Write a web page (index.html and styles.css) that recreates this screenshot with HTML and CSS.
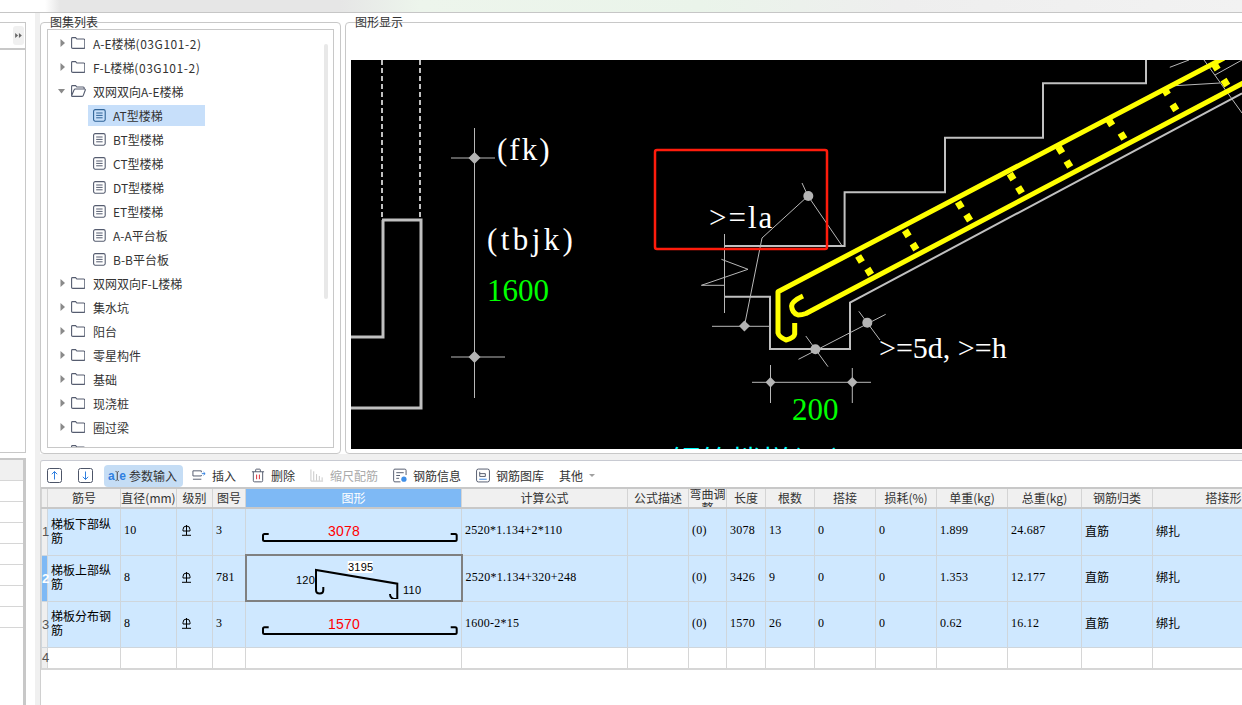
FILE: index.html
```html
<!DOCTYPE html>
<html lang="zh-CN">
<head>
<meta charset="utf-8">
<title>图集列表</title>
<link rel="stylesheet" href="styles.css">
</head>
<body>
<svg class="defs" width="0" height="0" aria-hidden="true">
  <defs>
    <symbol id="i-folder" viewBox="0 0 14 12"><path d="M.6 2V1.4q0-.8.8-.8h3.2l1.2 1.4h6.8q1.2 0 1.2 1.2v7q0 1.2-1.2 1.2H1.8q-1.2 0-1.2-1.2z" fill="none" stroke="currentColor" stroke-width="1.1"/></symbol>
    <symbol id="i-open" viewBox="0 0 15 12"><path d="M.6 10.500V1.400q0-.8.8-.8h3.200l1.200 1.400h6.400q1 0 1 1V4M.6 10.900 3 5q.3-1 1.300-1h9.200q1 0 .8 1l-2 5.400q-.3 1-1.200 1H1.400q-.8 0-.8-.5z" fill="none" stroke="currentColor" stroke-width="1.1"/></symbol>
    <symbol id="i-doc" viewBox="0 0 13 13"><rect x=".6" y=".6" width="11.6" height="11.6" rx="1.6" fill="none" stroke="currentColor" stroke-width="1.1"/><path d="M3.2 4h6.4M3.2 6.4h6.4M3.2 8.8h6.4" stroke="currentColor" fill="none"/></symbol>
    <symbol id="i-more" viewBox="0 0 5 8"><path d="M.5 0 5 4 .5 8z" fill="currentColor"/></symbol>
    <symbol id="i-grade" viewBox="0 0 9 11"><path d="M1 6V4.500a3.500 3.500 0 0 1 7 0V6zM4.500 0v10M0 10.300h9" fill="none" stroke="currentColor"/></symbol>
  </defs>
</svg>

<div class="topbar"></div>
<div class="main">
  <aside class="side">
    <div class="side-frame">
      <div class="side-tools"><span class="collapse"><svg class="collapse-ic" viewBox="0 0 8 6"><path d="M0 0 3.500 3 0 6zM4.500 0 8 3 4.500 6z"/></svg></span></div>
      <div class="side-blank"></div>
      <div class="side-grid">
        <div class="side-head"></div>
        <div class="side-row"></div><div class="side-row"></div><div class="side-row"></div><div class="side-row"></div>
        <div class="side-row"></div><div class="side-row"></div><div class="side-row"></div>
      </div>
    </div>
  </aside>

  <div class="content">
    <div class="upper">
      <section class="group group-list">
        <span class="legend">图集列表</span>
        <div class="listbox">
          <span class="scrollbar"></span>
          <ul class="tree">
            <li class="node"><svg class="arrow"><use href="#i-more" x="2" y="0" width="5" height="8"/></svg><svg class="folder"><use href="#i-folder"/></svg><span>A-E楼梯<span class="latin">(03G101-2)</span></span></li>
            <li class="node"><svg class="arrow"><use href="#i-more" x="2" y="0" width="5" height="8"/></svg><svg class="folder"><use href="#i-folder"/></svg><span>F-L楼梯<span class="latin">(03G101-2)</span></span></li>
            <li class="node"><svg class="arrow" viewBox="0 0 8 8"><path d="M0 2h7L3.500 6.500z" class="arrow-fill"/></svg><svg class="folder folder-open"><use href="#i-open"/></svg>双网双向A-E楼梯</li>
            <li class="leaf"><span class="leaf-in selected"><svg class="doc"><use href="#i-doc"/></svg>AT型楼梯</span></li>
            <li class="leaf"><span class="leaf-in"><svg class="doc"><use href="#i-doc"/></svg>BT型楼梯</span></li>
            <li class="leaf"><span class="leaf-in"><svg class="doc"><use href="#i-doc"/></svg>CT型楼梯</span></li>
            <li class="leaf"><span class="leaf-in"><svg class="doc"><use href="#i-doc"/></svg>DT型楼梯</span></li>
            <li class="leaf"><span class="leaf-in"><svg class="doc"><use href="#i-doc"/></svg>ET型楼梯</span></li>
            <li class="leaf"><span class="leaf-in"><svg class="doc"><use href="#i-doc"/></svg>A-A平台板</span></li>
            <li class="leaf"><span class="leaf-in"><svg class="doc"><use href="#i-doc"/></svg>B-B平台板</span></li>
            <li class="node"><svg class="arrow"><use href="#i-more" x="2" y="0" width="5" height="8"/></svg><svg class="folder"><use href="#i-folder"/></svg>双网双向F-L楼梯</li>
            <li class="node"><svg class="arrow"><use href="#i-more" x="2" y="0" width="5" height="8"/></svg><svg class="folder"><use href="#i-folder"/></svg>集水坑</li>
            <li class="node"><svg class="arrow"><use href="#i-more" x="2" y="0" width="5" height="8"/></svg><svg class="folder"><use href="#i-folder"/></svg>阳台</li>
            <li class="node"><svg class="arrow"><use href="#i-more" x="2" y="0" width="5" height="8"/></svg><svg class="folder"><use href="#i-folder"/></svg>零星构件</li>
            <li class="node"><svg class="arrow"><use href="#i-more" x="2" y="0" width="5" height="8"/></svg><svg class="folder"><use href="#i-folder"/></svg>基础</li>
            <li class="node"><svg class="arrow"><use href="#i-more" x="2" y="0" width="5" height="8"/></svg><svg class="folder"><use href="#i-folder"/></svg>现浇桩</li>
            <li class="node"><svg class="arrow"><use href="#i-more" x="2" y="0" width="5" height="8"/></svg><svg class="folder"><use href="#i-folder"/></svg>圈过梁</li>
            <li class="node node-cut"><svg class="arrow"><use href="#i-more" x="2" y="0" width="5" height="8"/></svg><svg class="folder"><use href="#i-folder"/></svg></li>
          </ul>
        </div>
      </section>

      <section class="group group-view">
        <span class="legend">图形显示</span>
        <svg class="canvas" viewBox="351 60 891 389" width="891" height="389">
          <g class="cad-heavy">
            <path d="M383 220V337H351M382 220H421V408H351"/>
          </g>
          <path class="cad-dash" d="M382 60V219M420 60V219"/>
          <g class="cad-mid">
            <path d="M724.500 246H844.600V192.300H945V137.700H1043V83.300H1146V60"/>
            <path d="M724.500 296.700H770V349H850V302.700L1242 93.300"/>
          </g>
          <g class="cad-thin">
            <path d="M474.500 128V398M451 158H495M451 357H505"/>
            <path d="M724.500 234V313M721.400 259.300 748 269.300 701.400 285.300H724.500"/>
            <path d="M802 183 808 196 841.500 245M808 196 762 238 744.400 326M712 326.300H770"/>
            <path d="M805.800 336 828 366.700M798.500 359.300 885.700 314.300M858.800 311.300 880 340"/>
            <path d="M770.500 365V403M852.300 368V403M752 382.300H871"/>
            <path d="M1169.800 67.300 1189 60M1169.800 86 1220 83M1204 60 1242 113M1215 75 1242 60"/>
          </g>
          <g class="cad-node">
            <polygon points="474.500,152 480.500,158 474.500,164 468.500,158"/>
            <polygon points="474.500,351 480.500,357 474.500,363 468.500,357"/>
            <polygon points="744.400,320.500 750,326 744.400,331.500 739,326"/>
            <polygon points="770.500,377 775.500,382.300 770.500,387.500 765.500,382.300"/>
            <polygon points="852.300,377 857.500,382.300 852.300,387.500 847,382.300"/>
            <circle cx="808.300" cy="196" r="5"/>
            <circle cx="815.400" cy="349.300" r="5"/>
            <circle cx="867.300" cy="322.700" r="5"/>
          </g>
          <g class="cad-bar">
            <path d="M794.700 323V334Q794 338 786 340 779 337 778 333V291.700L1224 58"/>
            <path d="M803 296Q792 301 791.600 306 792 313 798 315 802 315 806 313.500L1245 82"/>
          </g>
          <path class="cad-tie" d="M858.150 256l3.700 6M867.350 268.700l3.700 6M904.950 230.300l3.700 6M912.650 243.700l3.700 6M957.950 202l3.700 6M966.350 214.700l3.700 6M1009.750 173.700l3.700 6M1018.150 187l3.700 6M1058.450 147l3.700 6M1066.550 161l3.700 6M1108.450 119.300l3.700 6M1120.650 133l3.700 6M1164.150 88.700l3.700 6M1172.550 104.300l3.700 6M1213.950 63.700l3.700 6M1223.550 79.700l3.700 6"/>
          <rect class="cad-red" x="655" y="150" width="172" height="99" rx="2"/>
          <text class="cad-text ls-fk" x="497" y="160">(fk)</text>
          <text class="cad-text ls-tb" x="487" y="250">(tbjk)</text>
          <text class="cad-green" x="487" y="301">1600</text>
          <text class="cad-text ls-la" x="709" y="228">&gt;=la</text>
          <text class="cad-text cad-small" x="879" y="358">&gt;=5d, &gt;=h</text>
          <text class="cad-green" x="792" y="420">200</text>
          <text class="cad-cyan" x="671" y="472">钢筋楼梯(一)</text>
        </svg>
      </section>
    </div>

    <section class="lower">
      <div class="toolbar">
        <button class="tool tool-up"><svg class="ti ti-lg" viewBox="0 0 15 15"><rect x=".5" y=".5" width="14" height="14" rx="2" class="ti-box"/><path d="M7.500 11.500V3.500M4.800 6.200 7.500 3.500l2.700 2.700" class="ti-blue"/></svg></button>
        <button class="tool tool-down"><svg class="ti ti-lg" viewBox="0 0 15 15"><rect x=".5" y=".5" width="14" height="14" rx="2" class="ti-box"/><path d="M7.500 3.500V11.500M4.800 8.800 7.500 11.500l2.700-2.700" class="ti-blue"/></svg></button>
        <button class="tool tool-active"><span class="ae"><b>a</b><svg class="ibeam" viewBox="0 0 6 14"><path d="M.5 1q2.500 0 2.500 2v8q0 2-2.500 2M5.500 1Q3 1 3 3v8q0 2 2.500 2"/></svg><b>e</b></span>参数输入</button>
        <button class="tool"><svg class="ti" viewBox="0 0 15 15"><path d="M10 4V2.500H1V8h9V7M1 11.500h9" class="ti-line"/><path d="M10.500 5.500h3.500M12.300 3.800l1.800 1.700-1.800 1.700" class="ti-blue"/></svg>插入</button>
        <button class="tool"><svg class="ti" viewBox="0 0 15 15"><path d="M1 3.500h13M5 3.500V1.500q0-.8.800-.8h3.400q.8 0 .8.800v2M2.500 3.500V13q0 1.300 1.300 1.300h7.400q1.300 0 1.300-1.300V3.500" class="ti-line"/><path d="M6 6.500v5M9 6.500v5" class="ti-red"/></svg>删除</button>
        <button class="tool tool-off"><svg class="ti" viewBox="0 0 15 15"><path d="M1 1v12.500h13M4 3v10M7 6v7M10 8v5M13 9.500v3.500" class="ti-grey"/></svg>缩尺配筋</button>
        <button class="tool"><svg class="ti" viewBox="0 0 15 15"><path d="M14 7V2q0-1.300-1.300-1.300H2q-1.300 0-1.300 1.300v11q0 1.300 1.300 1.300h6M3.500 4.500h8M3.500 7.500h4M3.500 10.500h3" class="ti-line"/><circle cx="11.700" cy="11.500" r="2.800" class="ti-dot"/></svg>钢筋信息</button>
        <button class="tool"><svg class="ti" viewBox="0 0 15 15"><rect x=".6" y=".6" width="13.800" height="13.800" rx="2" class="ti-box"/><path d="M4 3.500V8.500H10V5.500H4" class="ti-line"/><path d="M3.500 11.500H11.500" class="ti-blue"/></svg>钢筋图库</button>
        <button class="tool tool-other">其他<span class="caret"></span></button>
      </div>

      <table class="grid">
        <colgroup>
          <col class="c0"><col class="c1"><col class="c2"><col class="c3"><col class="c4"><col class="c5"><col class="c6"><col class="c7"><col class="c8"><col class="c9"><col class="c10"><col class="c11"><col class="c12"><col class="c13"><col class="c14"><col class="c15"><col class="c16">
        </colgroup>
        <thead>
          <tr>
            <th></th><th>筋号</th><th>直径(mm)</th><th>级别</th><th>图号</th><th class="th-on">图形</th><th>计算公式</th><th>公式描述</th>
            <th><div class="th-clip"><span class="th-wrap">弯曲调整</span></div></th><th>长度</th><th>根数</th><th>搭接</th><th>损耗(%)</th><th>单重(kg)</th><th>总重(kg)</th><th>钢筋归类</th><th>搭接形式</th>
          </tr>
        </thead>
        <tbody>
          <tr class="sel">
            <td class="num">1</td><td class="cn">梯板下部纵筋</td><td>10</td><td><svg class="grade"><use href="#i-grade"/></svg></td><td>3</td>
            <td class="shape"><svg viewBox="246 510 215 45" width="215" height="45"><path class="bar" d="M268.700 535H264.500Q263 535 263 536.500V540.500Q263 542 264.500 542H455.200Q456.700 542 456.700 540.500V536.500Q456.700 535 455.200 535H450.700"/><text class="sh-red" x="328" y="537">3078</text></svg></td>
            <td>2520*1.134+2*110</td><td></td><td>(0)</td><td>3078</td><td>13</td><td>0</td><td>0</td><td>1.899</td><td>24.687</td><td class="cn">直筋</td><td class="cn">绑扎</td>
          </tr>
          <tr class="sel">
            <td class="num num-on">2</td><td class="cn">梯板上部纵筋</td><td>8</td><td><svg class="grade"><use href="#i-grade"/></svg></td><td>781</td>
            <td class="shape shape-on"><svg viewBox="247 557 213 41" width="213" height="41"><rect class="sh-bg" x="347.700" y="560" width="25" height="12"/><path class="bar" d="M323.300 586V589Q323.300 592.500 319.700 592.500 316 592.500 316 589V569L397.300 582.700V598H394Q390 597 390 593"/><text class="sh-txt" x="348" y="570">3195</text><text class="sh-txt" x="296" y="583">120</text><text class="sh-txt" x="403" y="593">110</text></svg></td>
            <td>2520*1.134+320+248</td><td></td><td>(0)</td><td>3426</td><td>9</td><td>0</td><td>0</td><td>1.353</td><td>12.177</td><td class="cn">直筋</td><td class="cn">绑扎</td>
          </tr>
          <tr class="sel">
            <td class="num">3</td><td class="cn">梯板分布钢筋</td><td>8</td><td><svg class="grade"><use href="#i-grade"/></svg></td><td>3</td>
            <td class="shape"><svg viewBox="246 602 215 45" width="215" height="45"><path class="bar" d="M268.700 627.300H264.500Q263 627.300 263 628.800V632.500Q263 634 264.500 634H455.200Q456.700 634 456.700 632.500V628.800Q456.700 627.300 455.200 627.300H450.700"/><text class="sh-red" x="328" y="629">1570</text></svg></td>
            <td>1600-2*15</td><td></td><td>(0)</td><td>1570</td><td>26</td><td>0</td><td>0</td><td>0.62</td><td>16.12</td><td class="cn">直筋</td><td class="cn">绑扎</td>
          </tr>
          <tr class="blank">
            <td class="num">4</td><td></td><td></td><td></td><td></td><td></td><td></td><td></td><td></td><td></td><td></td><td></td><td></td><td></td><td></td><td></td><td></td>
          </tr>
        </tbody>
      </table>
    </section>
  </div>
</div>
</body>
</html>
```

FILE: styles.css
```css
* { box-sizing: border-box; }
html, body { margin: 0; padding: 0; }
body {
  width: 1242px;
  height: 705px;
  overflow: hidden;
  background: #f0f0f0;
  font-family: "Noto Sans CJK SC", "Noto Sans", sans-serif;
  font-size: 12px;
  color: #333;
}
.defs { position: absolute; }

.topbar {
  height: 13px;
  border-bottom: 1px solid #c6c6c6;
  background: linear-gradient(90deg, #fff 0, #fff 45px, #e6e6e6 60px, #e6e6e6 340px, #edf5ec 420px, #eaf4ea 700px, #eeeeee 900px, #f2f2f2 1242px);
}
.main { display: flex; height: 692px; }

/* left strip */
.side { width: 35px; background: #fff; padding-top: 9px; flex: none; }
.side-frame { width: 26px; height: 683px; display: flex; flex-direction: column; }
.side-tools {
  height: 28px;
  border-top: 1px solid #c8c8c8;
  border-right: 1px solid #c8c8c8;
  border-bottom: 2px solid #c8c8c8;
  padding: 3px 0 0 13px;
  flex: none;
}
.collapse {
  display: flex;
  align-items: center;
  justify-content: center;
  width: 11px;
  height: 19px;
  background: #f0f0f0;
  border-radius: 3px;
}
.collapse-ic { width: 7px; height: 5px; fill: #666; }
.side-blank { height: 403px; border-right: 1px solid #c8c8c8; border-bottom: 1px solid #c8c8c8; flex: none; }
.side-grid { margin-top: 5px; border-top: 2px solid #c8c8c8; border-right: 3px solid #c8c8c8; flex: 1; }
.side-head { height: 21px; background: #f0f0f0; border-bottom: 1px solid #d6d6d6; }
.side-row { height: 21px; border-bottom: 1px solid #d6d6d6; }

/* right column */
.content { flex: 1; min-width: 0; margin-left: 5px; }
.upper { display: flex; gap: 4px; height: 441px; padding-top: 9px; background: #fff; }
.group {
  position: relative;
  height: 432px;
  border: 1px solid #c8c8c8;
  border-radius: 4px;
}
.legend { position: absolute; top: -9px; left: 9px; line-height: 16px; font-size: 12px; color: #333; }
.group-list { width: 301px; padding: 6px 6px 5px; flex: none; }
.group-view { flex: 1; margin-right: -6px; padding: 37px 0 4px 5px; }
.canvas { display: block; background: #000; }

/* tree */
.listbox {
  position: relative;
  height: 419px;
  border: 1px solid #c8c8c8;
  overflow: hidden;
}
.scrollbar {
  position: absolute;
  left: 276px;
  top: 14px;
  width: 4px;
  height: 255px;
  background: #e8e8e8;
  border-radius: 2px;
}
.tree { list-style: none; margin: 0; padding: 1px 0 0; }
.node {
  display: flex;
  align-items: center;
  height: 24px;
  padding-left: 10px;
  color: #333;
  white-space: nowrap;
}
.latin { letter-spacing: .55px; }
.arrow { width: 8px; height: 8px; margin-right: 5px; color: #8a8a8a; flex: none; }
.arrow-fill { fill: #8a8a8a; }
.folder { width: 14px; height: 12px; margin-right: 8px; color: #565d70; flex: none; }
.folder-open { width: 15px; margin-right: 7px; }
.leaf { height: 24px; padding: 2px 0 1px 40px; }
.leaf-in {
  display: flex;
  align-items: center;
  gap: 7px;
  width: 117px;
  height: 21px;
  padding-left: 5px;
  white-space: nowrap;
}
.selected { background: #c7dffa; }
.selected .doc { color: #2f6397; }
.doc { width: 13px; height: 13px; color: #565d70; flex: none; }

/* lower */
.lower {
  height: 245px;
  margin-top: 6px;
  background: #fff;
  border-top: 1px solid #c8cad2;
  border-left: 1px solid #d0d0d0;
  border-top-left-radius: 3px;
  overflow: hidden;
}
.toolbar { display: flex; align-items: center; gap: 5px; height: 26px; padding: 3px 0 0 1px; }
.tool {
  display: flex;
  align-items: center;
  gap: 6px;
  height: 22px;
  padding: 0 5px;
  border: 0;
  background: none;
  font: inherit;
  color: #333;
  white-space: nowrap;
}
.tool-up { margin-right: 1px; }
.tool-down { margin-right: 1px; }
.tool-active { background: #c5ddf5; border-radius: 4px; padding: 0 6px 0 4px; gap: 3px; margin-right: -1px; }
.tool-off { color: #aaa; }
.ti { width: 14px; height: 15px; flex: none; }
.ti-lg { width: 15px; }
.ti-box { fill: none; stroke: #4d5568; }
.ti-line { fill: none; stroke: #4d5568; }
.ti-blue { fill: none; stroke: #2f7fe0; }
.ti-red { fill: none; stroke: #d9232e; }
.ti-grey { fill: none; stroke: #c6c6c6; }
.ti-dot { fill: #3f8fe8; }
.ae { display: inline-flex; align-items: center; justify-content: space-between; width: 18px; font-size: 12px; font-family: "Liberation Sans", sans-serif; }
.ae b { color: #2f7fe0; }
.ibeam { width: 6px; height: 14px; fill: none; stroke: #555; }
.caret { width: 0; height: 0; border: 3px solid transparent; border-top: 3px solid #a0a0a0; border-bottom: 0; }

/* grid */
.grid {
  table-layout: fixed;
  width: 1265px;
  border-collapse: collapse;
  border-top: 2px solid #c8c8c8;
  font-family: "Liberation Serif", "Noto Sans CJK SC", serif;
  color: #000;
}
.c0 { width: 6px; } .c1 { width: 73px; } .c2 { width: 56px; } .c3 { width: 36px; }
.c4 { width: 33px; } .c5 { width: 216px; } .c6 { width: 166px; } .c7 { width: 61px; }
.c8 { width: 38px; } .c9 { width: 39px; } .c10 { width: 49px; } .c11 { width: 61px; }
.c12 { width: 61px; } .c13 { width: 71px; } .c14 { width: 74px; } .c15 { width: 71px; } .c16 { width: 154px; }
.grid th {
  height: 20px;
  padding: 0;
  background: #f0f0f0;
  border: 1px solid #d4d4d4;
  border-bottom: 2px solid #c8c8c8;
  font-family: "Noto Sans CJK SC", sans-serif;
  font-weight: 400;
  font-size: 12px;
  line-height: 16px;
  color: #333;
  white-space: nowrap;
}
.grid .th-on { background: #7eb9f5; color: #fff; }
.th-clip { height: 18px; overflow: hidden; white-space: normal; line-height: 14px; }
.th-wrap { display: block; margin-top: -2px; }
.grid td {
  height: 46px;
  padding: 0 0 2px 3px;
  border: 1px solid #cfd6dc;
  font-size: 12px;
  letter-spacing: .25px;
  overflow: hidden;
  white-space: nowrap;
}
.sel td { background: #cfe8ff; }
.grid .cn {
  font-family: "Noto Sans CJK SC", sans-serif;
  letter-spacing: 0;
  line-height: 14px;
  white-space: normal;
}
.grid .num {
  padding: 0;
  background: #efefef;
  font-family: "Liberation Sans", sans-serif;
  font-size: 13px;
  color: #555;
  letter-spacing: 0;
  overflow: visible;
}
.grid .num-on { background: #7eb9f5; color: #fff; font-weight: 700; }
.grid .blank td { height: 21px; padding: 0; background: #fff; border-color: #d6d6d6; border-bottom-width: 2px; }
.grid .blank .num { background: #efefef; }
.grade { display: block; width: 9px; height: 11px; margin-left: 2px; color: #000; }
.grid .shape { padding: 0; }
.shape svg { display: block; }
.grid .shape-on { border: 2px solid #808080; }
.bar { fill: none; stroke: #000; stroke-width: 2; }
.sh-red { fill: #f00; font: 14px "Liberation Sans", sans-serif; }
.sh-txt { fill: #000; font: 11px "Liberation Sans", sans-serif; }
.sh-bg { fill: #fff; }

/* drawing */
.cad-heavy path, .cad-mid path, .cad-thin path, .cad-dash, .cad-bar path, .cad-tie { fill: none; }
.cad-heavy path { stroke: #c0c0c0; stroke-width: 3; }
.cad-dash { stroke: #c0c0c0; stroke-width: 2; stroke-dasharray: 5 3; }
.cad-mid path { stroke: #c0c0c0; stroke-width: 2; }
.cad-thin path { stroke: #b8b8b8; stroke-width: 1; }
.cad-node { fill: #b4b4b4; }
.cad-bar path { stroke: #ff0; stroke-width: 5; stroke-linejoin: round; }
.cad-tie { stroke: #ff0; stroke-width: 7; }
.cad-red { fill: none; stroke: #ff1c0c; stroke-width: 2.500; }
.cad-text { fill: #fff; font: 31px "Liberation Serif", serif; }
.cad-small { font-size: 30px; }
.cad-green { fill: #0f0; font: 31px "Liberation Serif", serif; }
.cad-cyan { fill: #0ff; font: 30px "Noto Sans CJK SC", sans-serif; }
.ls-fk { letter-spacing: 2px; }
.ls-tb { letter-spacing: 3.400px; }
.ls-la { letter-spacing: 2px; }
```
